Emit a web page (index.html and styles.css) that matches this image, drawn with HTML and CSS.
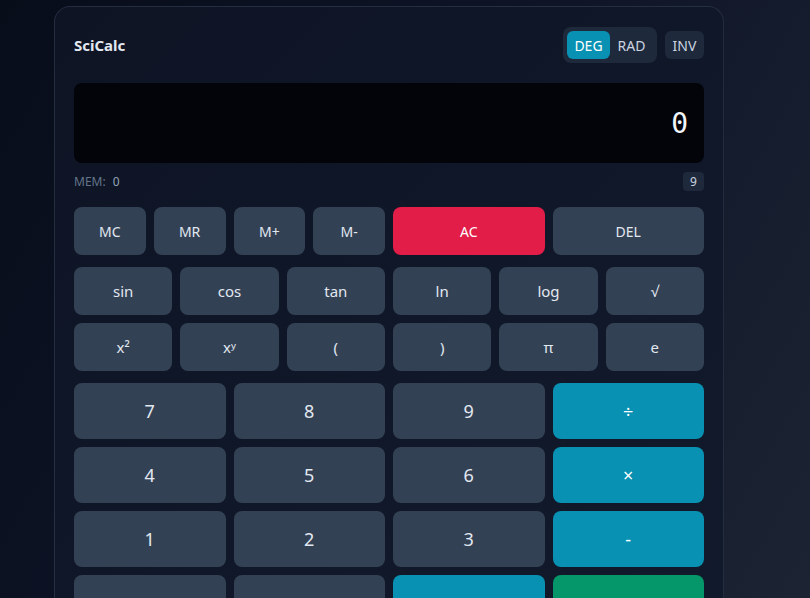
FILE: index.html
```html
<!DOCTYPE html>
<html>
<head>
<meta charset="utf-8">
<link rel="stylesheet" href="styles.css">
</head>
<body>
<div class="page">
  <div class="card">
    <div class="header">
      <div class="title">SciCalc</div>
      <div class="controls">
        <div class="toggle">
          <button class="tg active">DEG</button>
          <button class="tg">RAD</button>
        </div>
        <button class="inv">INV</button>
      </div>
    </div>
    <div class="display"><span class="value">0</span></div>
    <div class="memrow">
      <div class="mem"><span class="mem-label">MEM:</span> <span class="mem-val">0</span></div>
      <div class="badge">9</div>
    </div>
    <div class="grid memkeys">
      <button class="key">MC</button>
      <button class="key">MR</button>
      <button class="key">M+</button>
      <button class="key">M-</button>
      <button class="key danger span2">AC</button>
      <button class="key span2">DEL</button>
    </div>
    <div class="grid sci">
      <button class="key">sin</button>
      <button class="key">cos</button>
      <button class="key">tan</button>
      <button class="key">ln</button>
      <button class="key">log</button>
      <button class="key">√</button>
      <button class="key">x²</button>
      <button class="key">xʸ</button>
      <button class="key">(</button>
      <button class="key">)</button>
      <button class="key">π</button>
      <button class="key">e</button>
    </div>
    <div class="grid nums">
      <button class="key">7</button>
      <button class="key">8</button>
      <button class="key">9</button>
      <button class="key op">÷</button>
      <button class="key">4</button>
      <button class="key">5</button>
      <button class="key">6</button>
      <button class="key op">×</button>
      <button class="key">1</button>
      <button class="key">2</button>
      <button class="key">3</button>
      <button class="key op">-</button>
      <button class="key low">0</button>
      <button class="key low">.</button>
      <button class="key op low">+</button>
      <button class="key eq low">=</button>
    </div>
  </div>
</div>
</body>
</html>
```

FILE: styles.css
```css
* { box-sizing: border-box; }
html, body { margin: 0; padding: 0; height: 100%; }
body {
  background: linear-gradient(120deg, #080d1a 0%, #0e1426 45%, #1c2433 100%);
  font-family: "Noto Sans", "Open Sans", sans-serif;
  color: #e2e8f0;
  overflow: hidden;
}
.page {
  padding: 6px 0 0 54px;
}
.card {
  width: 670px;
  padding: 20px 19px 40px;
  border: 1px solid rgba(148, 163, 184, 0.16);
  border-radius: 16px;
  background: linear-gradient(135deg, #0e1424 0%, #111a2c 100%);
}
.header {
  display: flex;
  justify-content: space-between;
  align-items: center;
  height: 36px;
}
.title {
  font-weight: 700;
  font-size: 15px;
  color: #e2e8f0;
}
.controls {
  display: flex;
  align-items: center;
  gap: 8px;
}
.toggle {
  display: flex;
  padding: 4px;
  background: #1e293b;
  border-radius: 8px;
}
button {
  font-family: inherit;
  border: none;
  cursor: pointer;
}
.tg {
  height: 28px;
  width: 43px;
  padding: 0;
  font-size: 14px;
  background: transparent;
  color: #cbd5e1;
  border-radius: 6px;
}
.tg.active {
  background: #0891b2;
  color: #ffffff;
}
.inv {
  height: 28px;
  width: 39px;
  padding: 0;
  font-size: 14px;
  background: #1e293b;
  color: #cbd5e1;
  border-radius: 6px;
}
.display {
  margin-top: 20px;
  height: 80px;
  background: #020409;
  border-radius: 8px;
  display: flex;
  align-items: center;
  justify-content: flex-end;
  padding: 0 16px;
}
.value {
  font-family: "DejaVu Sans Mono", monospace;
  font-size: 28px;
  color: #f1f5f9;
}
.memrow {
  margin-top: 9px;
  display: flex;
  justify-content: space-between;
  align-items: center;
  height: 19px;
}
.mem {
  font-size: 12px;
}
.mem-label { color: #64748b; }
.mem-val { color: #94a3b8; margin-left: 4px; }
.badge {
  background: #1e293b;
  color: #cbd5e1;
  font-size: 12px;
  width: 21px;
  height: 19px;
  border-radius: 4px;
  display: flex;
  align-items: center;
  justify-content: center;
}
.grid {
  display: grid;
  gap: 8px;
}
.memkeys {
  margin-top: 16px;
  grid-template-columns: repeat(8, 1fr);
  grid-auto-rows: 48px;
}
.sci {
  margin-top: 12px;
  grid-template-columns: repeat(6, 1fr);
  grid-auto-rows: 48px;
}
.nums {
  margin-top: 12px;
  grid-template-columns: repeat(4, 1fr);
  grid-auto-rows: 56px;
}
.key {
  background: #334155;
  color: #e2e8f0;
  border-radius: 8px;
  font-size: 14px;
  padding: 0;
}
.sci .key { font-size: 15px; }
.nums .key { font-size: 18px; }
.nums .key.low { padding-top: 8px; }
.span2 { grid-column: span 2; }
.danger { background: #e11d48; color: #ffffff; }
.op { background: #0891b2; color: #ffffff; }
.eq { background: #059669; color: #ffffff; }
```
